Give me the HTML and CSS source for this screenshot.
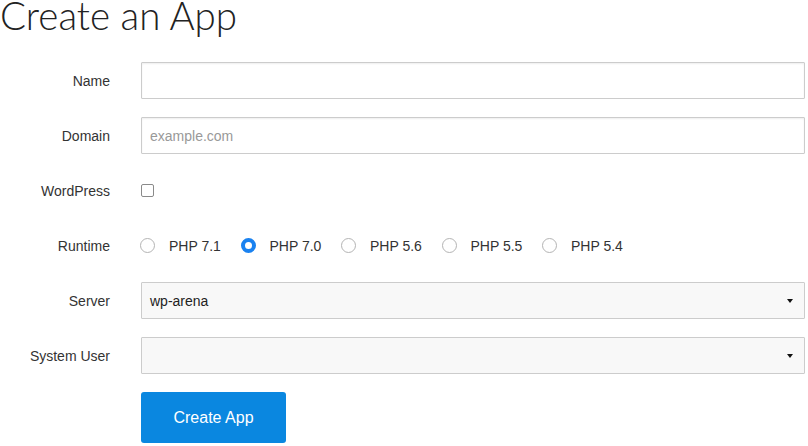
FILE: index.html
```html
<!DOCTYPE html>
<html>
<head>
<meta charset="utf-8">
<link rel="stylesheet" href="styles.css">
</head>
<body>
<div class="page">
  <h1 class="title">Create an App</h1>
  <form class="form">
    <div class="row">
      <label class="label">Name</label>
      <div class="field"><input class="input" type="text"></div>
    </div>
    <div class="row">
      <label class="label">Domain</label>
      <div class="field"><input class="input" type="text" placeholder="example.com"></div>
    </div>
    <div class="row">
      <label class="label">WordPress</label>
      <div class="field"><span class="checkbox"></span></div>
    </div>
    <div class="row">
      <label class="label">Runtime</label>
      <div class="field radios">
        <span class="radio-item"><span class="radio"></span>PHP 7.1</span>
        <span class="radio-item"><span class="radio checked"></span>PHP 7.0</span>
        <span class="radio-item"><span class="radio"></span>PHP 5.6</span>
        <span class="radio-item"><span class="radio"></span>PHP 5.5</span>
        <span class="radio-item"><span class="radio"></span>PHP 5.4</span>
      </div>
    </div>
    <div class="row">
      <label class="label">Server</label>
      <div class="field"><div class="select"><span>wp-arena</span><span class="caret"></span></div></div>
    </div>
    <div class="row">
      <label class="label">System User</label>
      <div class="field"><div class="select"><span></span><span class="caret"></span></div></div>
    </div>
    <div class="row">
      <span class="label"></span>
      <div class="field"><button type="button" class="button">Create App</button></div>
    </div>
  </form>
</div>
</body>
</html>
```
FILE: styles.css
```css
html, body { margin: 0; padding: 0; background: #fff; }
body { font-family: "Liberation Sans", Arial, sans-serif; font-size: 14px; color: #333; }
.page { padding: 0 3px 0 0; }
.title {
  margin: 0 0 31px 0;
  font-family: Lato, "Open Sans", sans-serif;
  font-weight: 300;
  font-size: 38.5px;
  line-height: 31px;
  color: #222;
  padding-left: 0;
  white-space: nowrap;
}
.form { display: flex; flex-direction: column; gap: 18px; }
.row { display: grid; grid-template-columns: 110px 1fr; column-gap: 31px; align-items: center; min-height: 37px; }
.label { text-align: right; color: #333; font-size: 14px; }
.field { display: flex; align-items: center; }
.input {
  box-sizing: border-box; width: 100%; height: 37px; margin: 0;
  border: 1px solid #ccc; border-radius: 1px;
  box-shadow: inset 0 1px 2px rgba(0,0,0,0.07);
  padding: 0 8px; font-family: "Liberation Sans", Arial, sans-serif; font-size: 14px; color: #333;
  background: #fff; outline: none;
}
.input::placeholder { color: #999; }
.checkbox {
  display: block; width: 11px; height: 11px; border: 1px solid #8a8a8a; border-radius: 2px; background: #fff;
}
.radios { gap: 0; }
.radio-item { display: flex; align-items: center; width: 100.5px; color: #333; }
.radio {
  box-sizing: border-box; width: 15px; height: 15px; border-radius: 50%; border: 1px solid #b4b4b4;
  background: #fff; margin-right: 14px; margin-left: -1px;
}
.radio.checked { border: 4.5px solid #1a82f0; background: #fff; }
.select {
  box-sizing: border-box; width: 100%; height: 37px;
  border: 1px solid #ccc; border-radius: 1px; background: #f8f8f8;
  display: flex; align-items: center; justify-content: space-between;
  padding: 0 11px 0 8px; color: #222;
}
.caret {
  width: 0; height: 0; border-left: 3.5px solid transparent; border-right: 3.5px solid transparent;
  border-top: 4px solid #111;
}
.button {
  width: 145px; height: 51px; margin: 0; border: 0; border-radius: 3px;
  background: #0a87e0; color: #fff; font-family: "Liberation Sans", Arial, sans-serif; font-size: 16px;
  cursor: pointer;
}
```
